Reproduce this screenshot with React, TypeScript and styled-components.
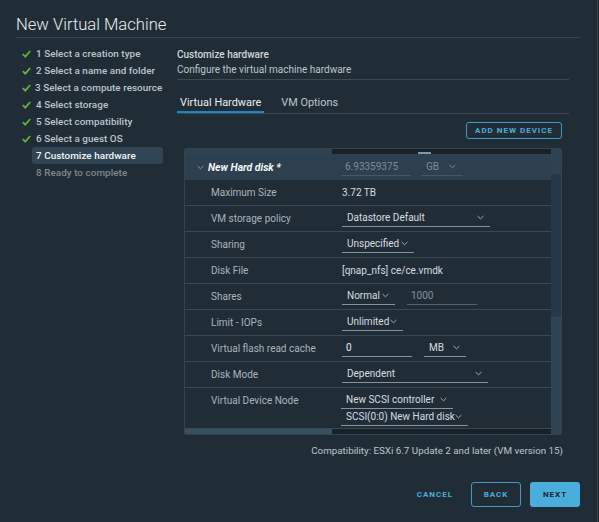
import React from 'react';
import styled, { createGlobalStyle } from 'styled-components';

const GlobalStyle = createGlobalStyle`
  html, body {
    margin: 0;
    padding: 0;
    background: #1f2a32;
  }
  body {
    font-family: Roboto, "Liberation Sans", sans-serif;
  }
  * { box-sizing: border-box; }
`;

const steps = [
  { label: '1 Select a creation type', state: 'done' },
  { label: '2 Select a name and folder', state: 'done' },
  { label: '3 Select a compute resource', state: 'done' },
  { label: '4 Select storage', state: 'done' },
  { label: '5 Select compatibility', state: 'done' },
  { label: '6 Select a guest OS', state: 'done' },
  { label: '7 Customize hardware', state: 'active' },
  { label: '8 Ready to complete', state: 'todo' },
];

const Check = () => (
  <svg width="9" height="8" viewBox="0 0 9 8">
    <path d="M0.8 4.2 L3.3 6.6 L8.2 1" fill="none" stroke="#5fb53a" strokeWidth="1.8" />
  </svg>
);

const Chevron = ({ color = '#a3afb6' }: { color?: string }) => (
  <svg width="7" height="5" viewBox="0 0 7 5">
    <path d="M0.6 1 L3.5 3.8 L6.4 1" fill="none" stroke={color} strokeWidth="1" />
  </svg>
);

const App = () => {
  return (
    <Page>
      <GlobalStyle />
      <Header>
        <Title>New Virtual Machine</Title>
      </Header>
      <Body>
        <Nav>
          {steps.map((s) => (
            <NavItem key={s.label}>
              <CheckSlot>{s.state === 'done' && <Check />}</CheckSlot>
              <NavLabel $state={s.state}>{s.label}</NavLabel>
            </NavItem>
          ))}
        </Nav>
        <Content>
          <SectionTitle>Customize hardware</SectionTitle>
          <Subtitle>Configure the virtual machine hardware</Subtitle>
          <TabBar>
            <Tab $active>Virtual Hardware</Tab>
            <Tab>VM Options</Tab>
          </TabBar>
          <Toolbar>
            <OutlineButton>ADD NEW DEVICE</OutlineButton>
          </Toolbar>
          <Grid>
            <GridMain>
              <TopStrip>
                <StripThumb />
                <StripTrack>
                  <ResizeHandle />
                </StripTrack>
              </TopStrip>
              <HeaderRow>
                <Chevron color="#8e9aa2" />
                <DiskName>New Hard disk *</DiskName>
                <HeaderValues>
                  <DimInput $w={70}>6.93359375</DimInput>
                  <DimSelect $w={42}>
                    GB <Chevron color="#7f8c94" />
                  </DimSelect>
                </HeaderValues>
              </HeaderRow>
              <Row>
                <Label>Maximum Size</Label>
                <Value>3.72 TB</Value>
              </Row>
              <Row>
                <Label>VM storage policy</Label>
                <Value>
                  <Select $w={148}>
                    Datastore Default <Chevron />
                  </Select>
                </Value>
              </Row>
              <Row>
                <Label>Sharing</Label>
                <Value>
                  <Select $w={72}>
                    Unspecified <Chevron />
                  </Select>
                </Value>
              </Row>
              <Row>
                <Label>Disk File</Label>
                <Value>[qnap_nfs] ce/ce.vmdk</Value>
              </Row>
              <Row>
                <Label>Shares</Label>
                <Value>
                  <Select $w={53}>
                    Normal <Chevron />
                  </Select>
                  <TextInput $w={70} $dim>1000</TextInput>
                </Value>
              </Row>
              <Row>
                <Label>Limit - IOPs</Label>
                <Value>
                  <Select $w={61}>
                    Unlimited <Chevron />
                  </Select>
                </Value>
              </Row>
              <Row>
                <Label>Virtual flash read cache</Label>
                <Value>
                  <TextInput $w={70}>0</TextInput>
                  <Select $w={42}>
                    MB <Chevron />
                  </Select>
                </Value>
              </Row>
              <Row>
                <Label>Disk Mode</Label>
                <Value>
                  <Select $w={146}>
                    Dependent <Chevron />
                  </Select>
                </Value>
              </Row>
              <TallRow>
                <Label>Virtual Device Node</Label>
                <Stack>
                  <Select $w={112}>
                    New SCSI controller <Chevron />
                  </Select>
                  <Select $w={127}>
                    SCSI(0:0) New Hard disk <Chevron />
                  </Select>
                </Stack>
              </TallRow>
              <BottomScroll>
                <HThumb />
              </BottomScroll>
            </GridMain>
            <VScroll>
              <VCorner />
              <VTrack />
              <VThumb />
            </VScroll>
          </Grid>
        </Content>
      </Body>
      <Compat>Compatibility: ESXi 6.7 Update 2 and later (VM version 15)</Compat>
      <Footer>
        <FlatButton>CANCEL</FlatButton>
        <OutlineButton $big>BACK</OutlineButton>
        <PrimaryButton>NEXT</PrimaryButton>
      </Footer>
    </Page>
  );
};

const Page = styled.div`
  width: 598px;
  height: 522px;
  background: #212d36;
  border-right: 1px solid #37444e;
  display: flex;
  flex-direction: column;
  overflow: hidden;
`;

const Header = styled.div`
  padding: 14px 17px 0 16px;
`;

const Title = styled.h1`
  margin: 0;
  font-size: 16.6px;
  font-weight: 300;
  line-height: 22px;
  color: #e9eef1;
  border-bottom: 1px solid #37464f;
  padding-bottom: 1px;
`;

const Body = styled.div`
  display: grid;
  grid-template-columns: 161px 1fr;
  padding: 0 28px 0 16px;
`;

const Nav = styled.div`
  display: flex;
  flex-direction: column;
  padding: 7px 14px 0 6px;
`;

const NavItem = styled.div`
  display: flex;
  align-items: center;
  height: 17px;
`;

const CheckSlot = styled.div`
  width: 10px;
  display: flex;
  align-items: center;
`;

const NavLabel = styled.div<{ $state: string }>`
  flex: 1;
  height: 17px;
  line-height: 17px;
  padding: 0 4px;
  border-radius: 3px;
  font-size: 9.9px;
  font-weight: 500;
  letter-spacing: 0.05px;
  white-space: nowrap;
  color: ${(p) =>
    p.$state === 'active' ? '#f2f5f6' : p.$state === 'todo' ? '#7c8991' : '#bcc5ca'};
  background: ${(p) => (p.$state === 'active' ? '#324555' : 'transparent')};
`;

const Content = styled.div`
  display: flex;
  flex-direction: column;
  padding-top: 9px;
`;

const SectionTitle = styled.div`
  font-size: 10px;
  font-weight: 500;
  line-height: 15px;
  color: #cfd7db;
`;

const Subtitle = styled.div`
  font-size: 10px;
  line-height: 15px;
  color: #bcc6cb;
  padding-bottom: 2px;
  border-bottom: 1px solid #3c4a55;
`;

const TabBar = styled.div`
  display: flex;
  gap: 14px;
  margin-top: 13px;
  height: 21px;
  border-bottom: 1px solid #3c4a55;
`;

const Tab = styled.div<{ $active?: boolean }>`
  padding: 0 3px;
  font-size: 10.9px;
  line-height: 20px;
  color: ${(p) => (p.$active ? '#e9eef1' : '#bcc6cb')};
  box-shadow: ${(p) => (p.$active ? 'inset 0 -2px 0 #1e84c4' : 'none')};
`;

const Toolbar = styled.div`
  display: flex;
  justify-content: flex-end;
  padding-right: 7px;
  margin-top: 8px;
`;

const buttonText = `
  font-family: Roboto, "Liberation Sans", sans-serif;
  font-size: 8px;
  font-weight: 700;
  letter-spacing: 1px;
`;

const OutlineButton = styled.button<{ $big?: boolean }>`
  height: ${(p) => (p.$big ? '25px' : '17px')};
  padding: ${(p) => (p.$big ? '0 11px' : '0 8px')};
  min-width: ${(p) => (p.$big ? '50px' : '96px')};
  background: transparent;
  border: 1px solid #3f9bc6;
  border-radius: 3px;
  color: #4aaed9;
  ${buttonText}
`;

const FlatButton = styled.button`
  height: 25px;
  padding: 0 9px;
  background: transparent;
  border: none;
  color: #4aaed9;
  ${buttonText}
`;

const PrimaryButton = styled.button`
  height: 25px;
  width: 50px;
  background: #49aedb;
  border: none;
  border-radius: 3px;
  color: #17242c;
  ${buttonText}
`;

const Grid = styled.div`
  margin: 9px 7px 0 7px;
  height: 287px;
  display: grid;
  grid-template-columns: 1fr 10px;
  border: 1px solid #34444f;
  border-radius: 2px;
  overflow: hidden;
`;

const GridMain = styled.div`
  display: flex;
  flex-direction: column;
  min-width: 0;
`;

const TopStrip = styled.div`
  display: flex;
  height: 5px;
`;

const StripThumb = styled.div`
  width: 147px;
  background: #2e4252;
`;

const StripTrack = styled.div`
  flex: 1;
  position: relative;
  background: #182127;
`;

const ResizeHandle = styled.div`
  position: absolute;
  left: 86px;
  bottom: 0;
  width: 13px;
  height: 2px;
  background: #8795a0;
`;

const HeaderRow = styled.div`
  display: flex;
  align-items: center;
  height: 26px;
  background: #2d4050;
  padding-left: 12px;
`;

const DiskName = styled.div`
  width: 133px;
  margin-left: 4px;
  font-size: 10.4px;
  font-weight: 700;
  font-style: italic;
  color: #f2f5f6;
`;

const HeaderValues = styled.div`
  display: flex;
  gap: 10px;
`;

const DimInput = styled.div<{ $w: number }>`
  width: ${(p) => p.$w}px;
  height: 17px;
  padding-left: 4px;
  font-size: 10px;
  line-height: 16px;
  color: #7f8d95;
  border-bottom: 1px solid #455867;
`;

const DimSelect = styled.div<{ $w: number }>`
  width: ${(p) => p.$w}px;
  height: 17px;
  display: flex;
  align-items: center;
  justify-content: space-between;
  padding: 0 7px 1px 5px;
  font-size: 10px;
  color: #7f8d95;
  border-bottom: 1px solid #455867;
`;

const Row = styled.div`
  display: grid;
  grid-template-columns: 156px 1fr;
  align-items: center;
  height: 26px;
  border-bottom: 1px solid #3a4853;
`;

const TallRow = styled(Row)`
  height: 40px;
  align-items: start;
  padding-top: 4px;
  border-bottom: none;
`;

const Label = styled.div`
  padding-left: 26px;
  font-size: 10px;
  line-height: 17px;
  color: #a9b4bb;
`;

const Value = styled.div`
  display: flex;
  align-items: center;
  gap: 12px;
  font-size: 10px;
  color: #d6dde1;
  padding-left: 1px;
`;

const Stack = styled.div`
  display: flex;
  flex-direction: column;
`;

const Select = styled.div<{ $w: number }>`
  width: ${(p) => p.$w}px;
  height: 17px;
  display: flex;
  align-items: center;
  justify-content: space-between;
  padding: 0 6px 1px 5px;
  font-size: 10px;
  color: #d6dde1;
  border-bottom: 1px solid #8493a0;
  white-space: nowrap;
`;

const TextInput = styled.div<{ $w: number; $dim?: boolean }>`
  width: ${(p) => p.$w}px;
  height: 17px;
  padding-left: 4px;
  font-size: 10px;
  line-height: 16px;
  color: ${(p) => (p.$dim ? '#86929a' : '#e4e9ec')};
  border-bottom: 1px solid ${(p) => (p.$dim ? '#55636e' : '#8493a0')};
`;

const BottomScroll = styled.div`
  margin-top: auto;
  height: 6px;
  background: #182127;
  border-top: 1px solid #3a4853;
  display: flex;
`;

const HThumb = styled.div`
  width: 147px;
  background: #37505f;
`;

const VScroll = styled.div`
  display: flex;
  flex-direction: column;
  background: #263745;
`;

const VCorner = styled.div`
  height: 25px;
  background: #2e4252;
`;

const VTrack = styled.div`
  height: 143px;
  background: #25394a;
`;

const VThumb = styled.div`
  flex: 1;
  background: #2f4556;
`;

const Compat = styled.div`
  margin-top: 8px;
  padding-right: 34px;
  text-align: right;
  font-size: 9.8px;
  line-height: 15px;
  color: #bcc6cb;
`;

const Footer = styled.div`
  display: flex;
  justify-content: flex-end;
  align-items: center;
  gap: 9px;
  margin-top: 24px;
  padding-right: 17px;
`;

export default App;
